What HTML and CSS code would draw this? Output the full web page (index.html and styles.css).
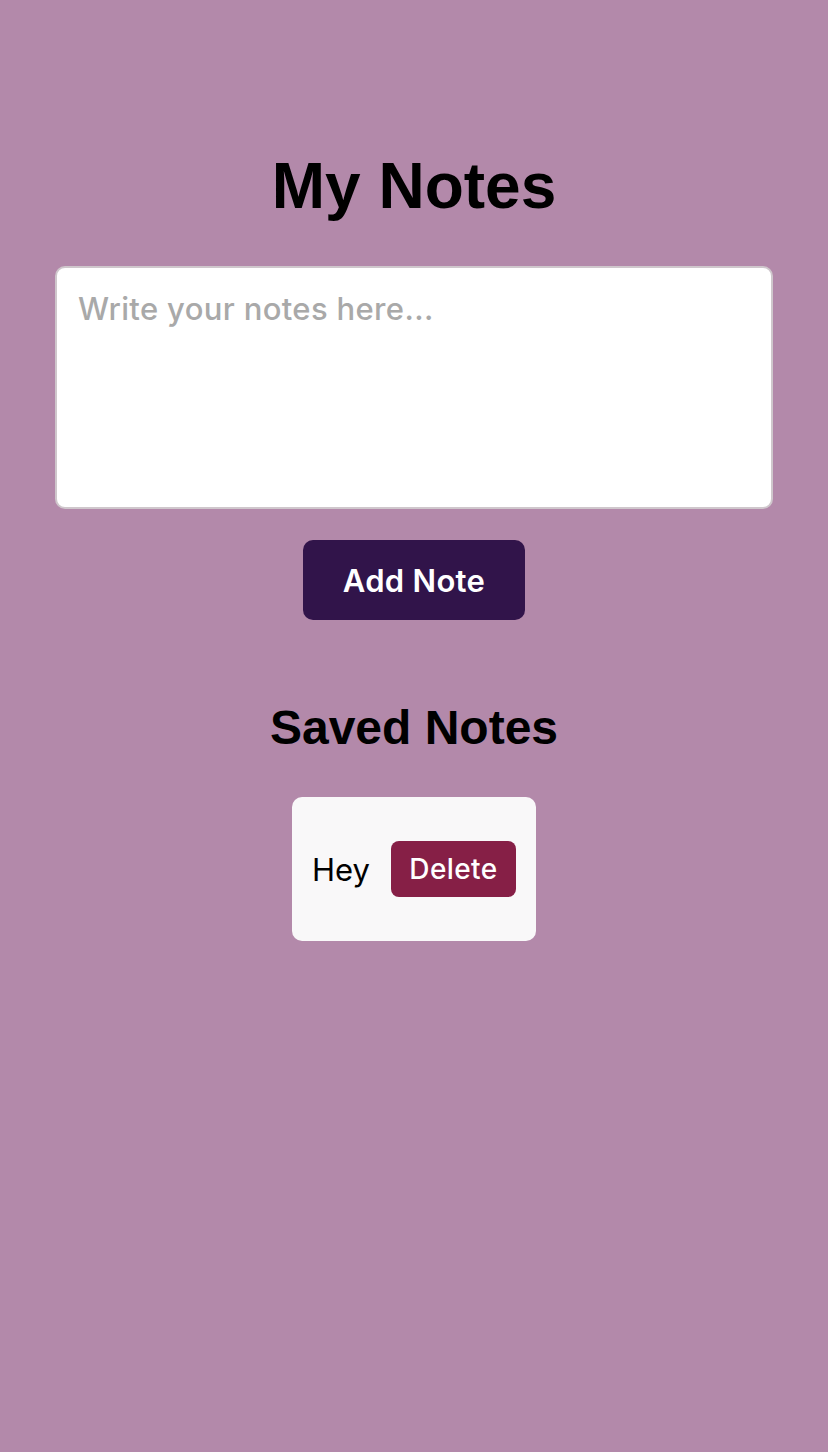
FILE: index.html
```html
<!DOCTYPE html>
<html>
<head>
<meta charset="utf-8">
<link rel="stylesheet" href="styles.css">
</head>
<body>
<main class="app">
  <h1 class="title">My Notes</h1>
  <textarea class="note-input" placeholder="Write your notes here..."></textarea>
  <button class="add-btn">Add Note</button>
  <h2 class="subtitle">Saved Notes</h2>
  <ul class="notes">
    <li class="note">
      <span class="note-text">Hey</span>
      <button class="delete-btn">Delete</button>
    </li>
  </ul>
</main>
</body>
</html>
```
FILE: styles.css
```css
html, body {
  margin: 0;
  padding: 0;
  background: #b389aa;
  min-height: 100%;
}
body {
  height: 1452px;
}
.app {
  display: flex;
  flex-direction: column;
  align-items: center;
  padding: 141px 55px 0;
}
.title {
  margin: 0;
  font-family: "Liberation Sans", Arial, sans-serif;
  font-weight: 700;
  font-size: 64px;
  line-height: 90px;
  color: #000;
}
.note-input {
  box-sizing: border-box;
  width: 718px;
  height: 243px;
  margin-top: 35px;
  padding: 22px 21px;
  border: 2px solid #cfc7cc;
  border-radius: 10px;
  background: #fff;
  font-family: Inter, "Noto Sans", sans-serif;
  font-size: 31px;
  letter-spacing: 0.35px;
  font-weight: 500;
  resize: none;
  outline: none;
}
.note-input::placeholder {
  color: #a9a9a9;
}
.add-btn {
  margin-top: 31px;
  width: 222px;
  height: 80px;
  border: none;
  border-radius: 10px;
  background: #31144a;
  color: #fff;
  font-family: Inter, "Noto Sans", sans-serif;
  font-size: 31px;
  font-weight: 600;
  letter-spacing: 0.3px;
}
.subtitle {
  margin: 80px 0 0;
  font-family: "Liberation Sans", Arial, sans-serif;
  font-weight: 700;
  font-size: 48px;
  line-height: 56px;
  color: #000;
}
.notes {
  list-style: none;
  margin: 41px 0 0;
  padding: 0;
}
.note {
  display: flex;
  align-items: center;
  gap: 21px;
  width: 244px;
  height: 144px;
  box-sizing: border-box;
  padding: 0 20px;
  background: #f9f8f9;
  border-radius: 10px;
}
.note-text {
  font-family: Inter, "Noto Sans", sans-serif;
  font-size: 31px;
  color: #000;
}
.delete-btn {
  width: 127px;
  height: 56px;
  border: none;
  border-radius: 8px;
  background: #861f46;
  color: #fff;
  font-family: Inter, "Noto Sans", sans-serif;
  font-size: 28px;
  font-weight: 500;
  letter-spacing: 0.4px;
}
```
